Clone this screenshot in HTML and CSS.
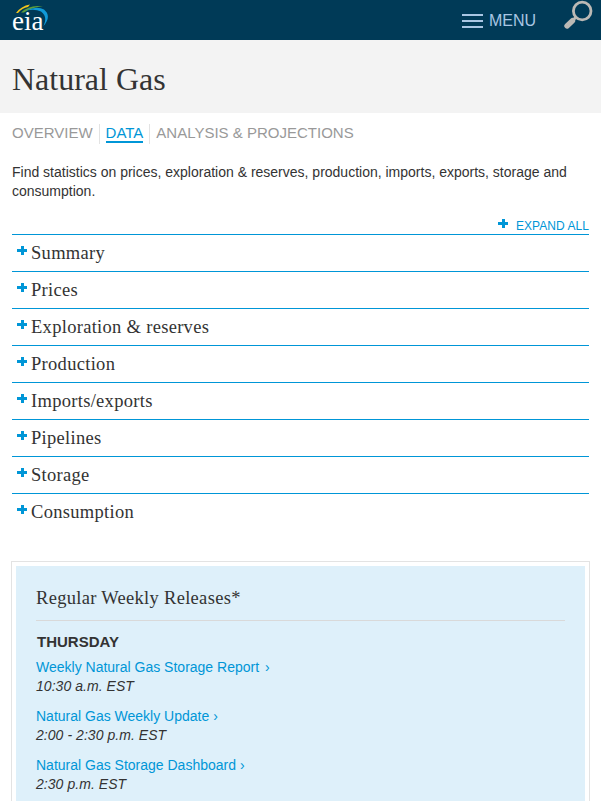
FILE: index.html
```html
<!DOCTYPE html>
<html lang="en">
<head>
<meta charset="utf-8">
<title>Natural Gas</title>
<link rel="stylesheet" href="styles.css">
</head>
<body>
<header class="topbar">
  <a class="logo" aria-label="eia">
    <svg class="swoosh" width="34" height="22" viewBox="0 0 34 22">
      <path d="M0 9Q5 2 14 .5L12 3Q6 4 2 9Z" fill="#f4c61a"/>
      <path d="M5 8.5Q14 0 27 2.5Q16 3 8 8.5Z" fill="#5b9d3c"/>
      <path d="M10 6.5Q21 1.5 28 5.5Q36 12 27.500 22Q32 12.500 25 7.500Q19 4.500 10 6.500Z" fill="#109ad8"/>
    </svg>
    <span class="logo-text">eia</span>
  </a>
  <nav class="tools">
    <span class="bars"><i></i><i></i><i></i></span>
    <span class="menu">MENU</span>
    <svg class="search" width="30" height="30" viewBox="0 0 30 30">
      <circle cx="19.2" cy="11" r="8.8" fill="none" stroke="#bbb9b5" stroke-width="2.8"/>
      <path d="M12.700 17.500L10 20" stroke="#bbb9b5" stroke-width="3"/>
      <path d="M9.500 20.700L4 26" stroke="#bbb9b5" stroke-width="5.400" stroke-linecap="round"/>
    </svg>
  </nav>
</header>
<div class="title"><h1>Natural Gas</h1></div>
<main>
  <nav class="tabs"><a>OVERVIEW</a><a class="active"><span>DATA</span></a><a>ANALYSIS &amp; PROJECTIONS</a></nav>
  <p class="intro">Find statistics on prices, exploration &amp; reserves, production, imports, exports, storage and consumption.</p>
  <div class="expand"><i class="plus"></i><span>EXPAND ALL</span></div>
  <ul class="sections">
    <li><i class="plus"></i>Summary</li>
    <li><i class="plus"></i>Prices</li>
    <li><i class="plus"></i>Exploration &amp; reserves</li>
    <li><i class="plus"></i>Production</li>
    <li><i class="plus"></i>Imports/exports</li>
    <li><i class="plus"></i>Pipelines</li>
    <li><i class="plus"></i>Storage</li>
    <li><i class="plus"></i>Consumption</li>
  </ul>
  <section class="releases">
    <div class="panel">
      <h2>Regular Weekly Releases*</h2>
      <h3>THURSDAY</h3>
      <p><a>Weekly Natural Gas Storage Report <b>›</b></a><em>10:30 a.m. EST</em></p>
      <p><a>Natural Gas Weekly Update ›</a><em>2:00 - 2:30 p.m. EST</em></p>
      <p><a>Natural Gas Storage Dashboard ›</a><em>2:30 p.m. EST</em></p>
    </div>
  </section>
</main>
</body>
</html>
```
FILE: styles.css
```css
* { box-sizing: border-box; }
body { margin: 0; background: #fff; color: #333; font: 14px/19px "Liberation Sans", Arial, sans-serif; }
h1, h2, h3, p, ul { margin: 0; padding: 0; font-weight: normal; }
.topbar { height: 40px; background: #003a57; display: flex; justify-content: space-between; padding: 0 8px 0 12px; }
.logo { position: relative; width: 40px; height: 40px; }
.logo-text { position: absolute; left: 0; top: 5px; font: 27px/32px "Liberation Serif", serif; color: #fff; }
.swoosh { position: absolute; left: 4px; top: 4px; }
.tools { display: flex; }
.bars { width: 21px; height: 14px; margin-top: 14px; display: flex; flex-direction: column; justify-content: space-between; }
.bars i { height: 2px; background: #a9c6e3; }
.menu { margin: 11px 27px 0 6px; font-size: 16px; line-height: 20px; color: #a9c6e3; }
.title { height: 73px; background: #f3f3f3; padding: 19px 12px 0; }
h1 { font: 32px/40px "Liberation Serif", serif; }
main { padding: 11px 12px 0; }
.tabs { display: flex; height: 20px; font-size: 15px; line-height: 18px; color: #999; }
.tabs a { padding: 0 6px; border-left: 1px solid #e3e3e3; white-space: nowrap; }
.tabs a:first-child { padding-left: 0; border: 0; }
.tabs .active { color: #0096d7; }
.active span { display: block; height: 19px; border-bottom: 2px solid #0096d7; }
.intro { margin-top: 19px; }
.expand { display: flex; justify-content: flex-end; height: 33px; padding-top: 17px; font-size: 12px; line-height: 16px; letter-spacing: .06px; color: #0096d7; }
.expand .plus { margin: 1px 8px 0 0; }
.plus { display: block; width: 10px; height: 10px; background: linear-gradient(#0096d7, #0096d7) 4px 0 / 3px 9px no-repeat, linear-gradient(#0096d7, #0096d7) 0 3px / 10px 3px no-repeat; }
.sections { list-style: none; }
.sections li { height: 37px; border-top: 1px solid #0096d7; display: flex; padding-left: 5px; font: 18.500px/36px "Liberation Serif", serif; letter-spacing: .3px; }
.sections .plus { margin: 11px 4px 0 0; }
.releases { margin: 31px -1px 0; height: 240px; border: 1px solid #e3e3e3; border-bottom: 0; padding: 4px 4px 0; }
.panel { height: 235px; background: #def0fa; padding: 20px 20px 0; overflow: hidden; }
h2 { height: 35px; border-bottom: 1px solid #d9d9d9; font: 18.500px/24px "Liberation Serif", serif; letter-spacing: .3px; }
h3 { margin: 11px 0 7px 1px; font-size: 15px; font-weight: bold; line-height: 19px; }
.panel p { margin-bottom: 11px; }
.panel a, .panel em { display: block; }
.panel a { color: #0096d7; }
.panel em { letter-spacing: .05px; }
.panel b { font-weight: normal; margin-left: 2px; }
```
